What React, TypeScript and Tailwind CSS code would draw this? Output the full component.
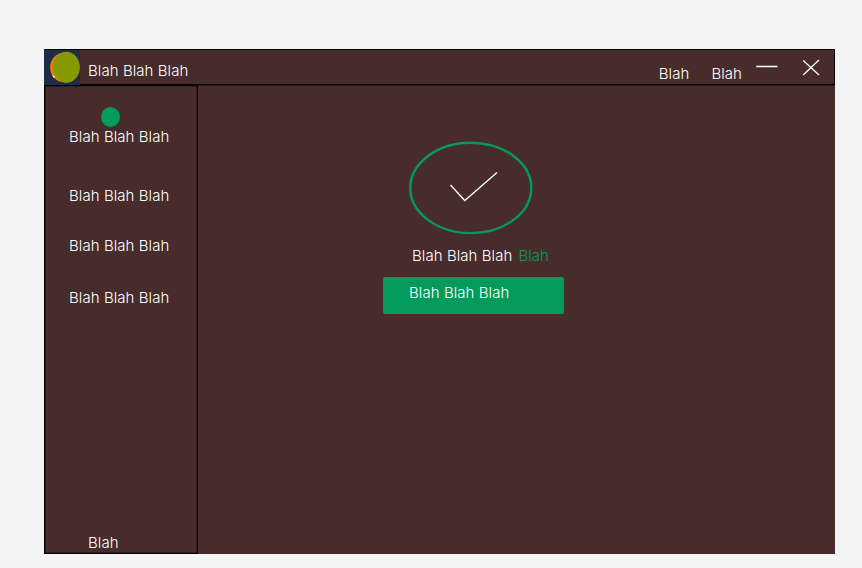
const navItems = [
  { label: "Blah Blah Blah", spacing: "mt-0" },
  { label: "Blah Blah Blah", spacing: "mt-[39px]" },
  { label: "Blah Blah Blah", spacing: "mt-[30px]" },
  { label: "Blah Blah Blah", spacing: "mt-8" },
];

function Logo() {
  return (
    <svg className="h-[35px] w-9 shrink-0" viewBox="0 0 36 35" aria-hidden="true">
      <rect width="36" height="35" fill="#202b45" />
      <ellipse cx="19" cy="17.500" rx="12.800" ry="14.500" fill="#f57c00" />
      <path d="M9 25.500l1.500 2" stroke="#e9e4dc" strokeWidth="1.500" />
      <ellipse cx="22.300" cy="17.300" rx="13.600" ry="15.600" fill="#869a00" />
    </svg>
  );
}

function TitleBar() {
  return (
    <header className="flex h-9 items-start border-t border-r border-b border-black">
      <Logo />
      <h1 className="mt-[11px] ml-2">Blah Blah Blah</h1>
      <nav className="mt-3.5 ml-auto flex gap-[22px]">
        <span>Blah</span>
        <span>Blah</span>
      </nav>
      <svg className="mt-1.5 ml-3 h-6 w-20" viewBox="0 0 80 24" fill="none" stroke="#fff" strokeWidth="1.300" aria-hidden="true">
        <path d="M2.200 10.500h21.300M49.200 4.500L65 19M65 4L49.200 19" />
      </svg>
    </header>
  );
}

function Sidebar() {
  return (
    <aside className="flex w-[154px] flex-col border border-black pl-6 shadow-[inset_0_0_0_0.5px_#1b1010]">
      <span className="mt-[21px] ml-8 h-5 w-[19px] rounded-[50%] bg-[#029b5b]" />
      {navItems.map((item, i) => (
        <span key={i} className={item.spacing}>{item.label}</span>
      ))}
      <span className="mt-auto ml-[19px]">Blah</span>
    </aside>
  );
}

export default function App() {
  return (
    <div className="h-[568px] w-[862px] bg-[#f4f4f4] pt-[49px] pl-11 font-['Inter',sans-serif] text-[15px] leading-5 font-[340] tracking-[0.07px] whitespace-nowrap text-white">
      <div className="flex h-[505px] w-[791px] flex-col bg-[#482c2c]">
        <TitleBar />
        <div className="flex min-h-0 flex-1">
          <Sidebar />
          <main className="flex flex-1 flex-col items-start border-t border-[#271717] pl-[185px]">
            <svg className="mt-[55px] ml-[26px] h-[94px] w-[124px]" viewBox="0 0 124 94" fill="none" aria-hidden="true">
              <ellipse cx="61.800" cy="46.900" rx="60.500" ry="45.200" stroke="#029b5b" strokeWidth="2.400" />
              <path d="M41.500 44L55.800 59.500L88 31.500" stroke="#fff" strokeWidth="1.300" />
            </svg>
            <p className="mt-[11px] ml-[29px] flex gap-1.5">
              <span>Blah Blah Blah</span>
              <span className="text-[#029b5b]">Blah</span>
            </p>
            <button className="mt-[11px] flex h-[37px] w-[181px] items-start rounded-[2px] bg-[#029b5b] pt-1.5 pl-[26px]">
              Blah Blah Blah
            </button>
          </main>
        </div>
      </div>
    </div>
  );
}
